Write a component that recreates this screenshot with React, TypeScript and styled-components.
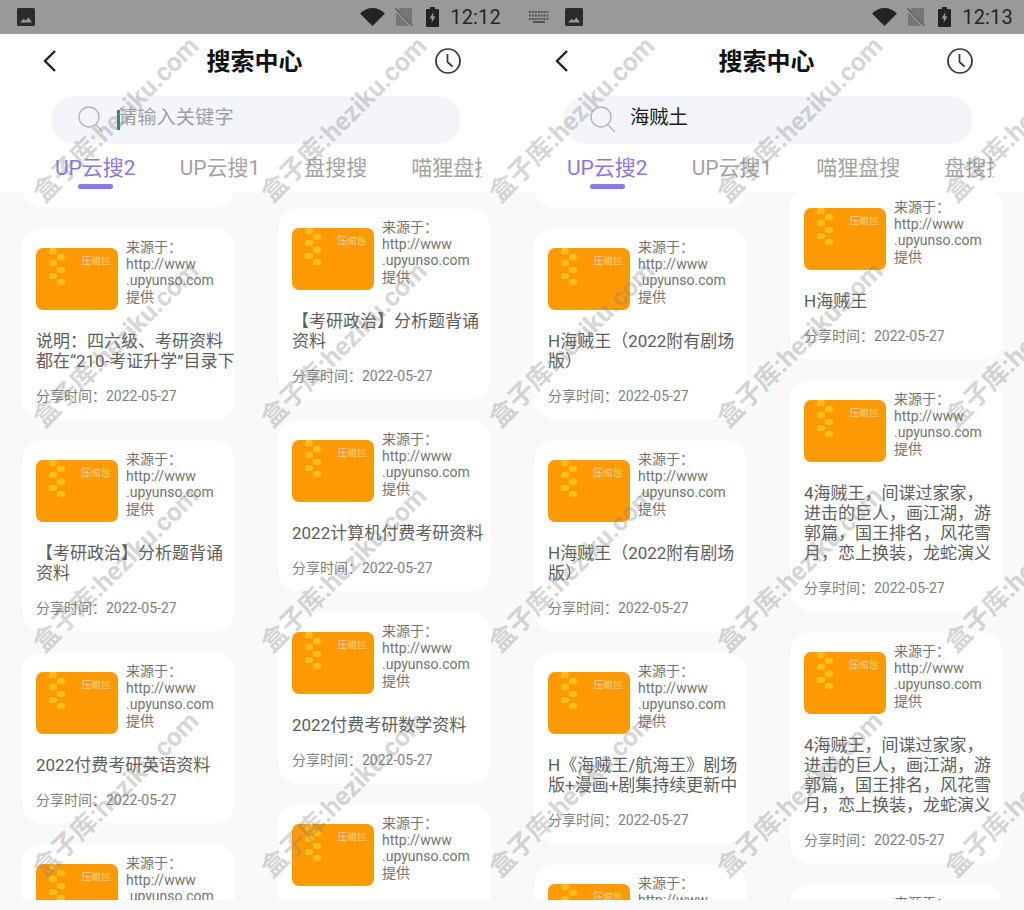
import React from 'react'
import styled, { createGlobalStyle } from 'styled-components'

const GlobalStyle = createGlobalStyle`
  html, body {
    margin: 0;
    padding: 0;
    background: #f9f9f9;
  }
  * {
    box-sizing: border-box;
  }
`

const FONT = `Roboto, "Noto Sans CJK SC", sans-serif`

const Page = styled.div`
  position: relative;
  display: flex;
  width: 1024px;
  height: 910px;
  overflow: hidden;
  font-family: ${FONT};
`

const Phone = styled.div`
  width: 512px;
  height: 910px;
  display: flex;
  flex-direction: column;
  background: #f9f9f9;
`

const StatusBar = styled.div`
  height: 34px;
  flex: none;
  background: #999999;
  display: flex;
  align-items: center;
  padding: 0 11px 0 17px;
  color: #222222;
`

const StatusLeft = styled.div`
  display: flex;
  align-items: center;
  gap: 16px;
  flex: 1;
`

const StatusRight = styled.div`
  display: flex;
  align-items: center;
`

const Time = styled.span`
  font-size: 20px;
  margin-left: 11px;
  letter-spacing: 0.2px;
  color: #262626;
`

const Top = styled.div`
  flex: none;
  height: 158px;
  background: #ffffff;
  display: flex;
  flex-direction: column;
`

const Header = styled.div`
  height: 54px;
  padding: 0 51px 0 42px;
  display: grid;
  grid-template-columns: 1fr auto 1fr;
  align-items: center;
  justify-items: start;
`

const HeaderTitle = styled.h1`
  margin: 2px 0 0 6px;
  font-size: 24px;
  font-weight: 700;
  color: #111111;
  line-height: 32px;
`

const HeaderAction = styled.div`
  justify-self: end;
  display: flex;
`

const SearchBar = styled.div`
  width: 410px;
  height: 48px;
  margin: 8px 0 0 51px;
  border-radius: 24px;
  background: #f3f5fa;
  display: flex;
  align-items: center;
  padding: 0 0 0 27px;
  font-size: 19.3px;
`

const SearchText = styled.span<{ $filled: boolean }>`
  margin-left: ${(p) => (p.$filled ? '14px' : '-2px')};
  padding-bottom: 9px;
  color: ${(p) => (p.$filled ? '#1a1a1a' : '#a0a0a0')};
`

const Caret = styled.span`
  width: 3px;
  height: 20px;
  margin-left: 13px;
  background: #12957c;
`

const Tabs = styled.div`
  width: 431px;
  margin: 9px 0 0 51px;
  padding-left: 4px;
  display: flex;
  gap: 44px;
  overflow: hidden;
`

const Tab = styled.div<{ $active?: boolean }>`
  flex: none;
  position: relative;
  height: 37px;
  font-size: 21px;
  line-height: 30px;
  white-space: nowrap;
  color: ${(p) => (p.$active ? '#8b78e6' : '#a3a3a3')};
`

const TabMark = styled.span`
  position: absolute;
  left: 23px;
  bottom: 1px;
  width: 35px;
  height: 5px;
  border-radius: 3px;
  background: #8b78e6;
`

const List = styled.div`
  flex: none;
  height: 708px;
  padding-left: 22px;
  display: flex;
  gap: 43px;
  overflow: hidden;
`

const Column = styled.div<{ $shift: number }>`
  width: 213px;
  flex: none;
  display: flex;
  flex-direction: column;
  gap: 22px;
  margin-top: ${(p) => p.$shift}px;
`

const CardBox = styled.div`
  flex: none;
  width: 213px;
  background: #ffffff;
  border-radius: 20px;
  padding: 10px 0 15px 14px;
`

const CardTop = styled.div`
  display: flex;
  gap: 8px;
  height: 66px;
`

const Thumb = styled.div`
  position: relative;
  flex: none;
  width: 82px;
  height: 62px;
  margin-top: 9px;
  border-radius: 7px;
  background: #ff9a05;
  overflow: hidden;
`

const ThumbLabel = styled.span`
  position: absolute;
  top: 7px;
  right: 8px;
  font-size: 9.5px;
  line-height: 12px;
  color: #ffd48a;
`

const Source = styled.div`
  font-size: 14px;
  line-height: 16.5px;
  color: #737373;
`

const CardTitle = styled.div`
  margin-top: 26px;
  font-size: 17px;
  line-height: 20px;
  color: #5e5e5e;
`

const CardDate = styled.div`
  margin-top: 17px;
  font-size: 14px;
  line-height: 16px;
  color: #7f7f7f;
`

const Marks = styled.div`
  position: absolute;
  left: 0;
  top: 5px;
  display: grid;
  grid-template-columns: repeat(5, 228px);
  grid-auto-rows: 225px;
  pointer-events: none;
`

const Mark = styled.div`
  display: flex;
  align-items: center;
  justify-content: center;
  white-space: nowrap;
  font-size: 26px;
  font-weight: 700;
  color: rgba(125, 125, 125, 0.33);
  transform: rotate(-45deg);
`

const ZipperIcon = () => (
  <svg width="82" height="62" viewBox="0 0 82 62">
    {[
      [13, 0],
      [21, 6],
      [13, 12],
      [21, 19],
      [13, 25],
      [21, 31],
    ].map(([x, y]) => (
      <rect key={`${x}-${y}`} x={x} y={y} width="8" height="6" rx="2.5" fill="#ffc01e" />
    ))}
  </svg>
)

const ImageIcon = () => (
  <svg width="18" height="18" viewBox="0 0 18 18">
    <path
      d="M1.500 0h15A1.500 1.500 0 0 1 18 1.500v15a1.500 1.500 0 0 1-1.500 1.500h-15A1.500 1.500 0 0 1 0 16.500v-15A1.500 1.500 0 0 1 1.500 0zM3 14.500h12l-3.500-5-2.800 3.300-1.900-2.100z"
      fill="#2b2b2b"
      fillRule="evenodd"
    />
  </svg>
)

const KeyboardIcon = () => (
  <svg width="20" height="12" viewBox="0 0 20 12">
    <g fill="#555555">
      {[0, 3.500, 7].map((y) =>
        [0, 1, 2, 3, 4, 5, 6].map((i) => (
          <rect key={`${y}-${i}`} x={i * 2.9} y={y} width="2" height="2" />
        )),
      )}
      <rect x="4" y="10" width="12" height="2" />
    </g>
  </svg>
)

const WifiIcon = () => (
  <svg width="25" height="18" viewBox="0 0 25 18">
    <path d="M0 5.500C3.500 2 8 0 12.500 0S21.500 2 25 5.500L12.500 18z" fill="#222222" />
  </svg>
)

const NoSimIcon = () => (
  <svg width="18" height="18" viewBox="0 0 18 18" style={{ marginLeft: 10 }}>
    <path d="M5 0h12v16.500L3 1.500zM1 4l13.500 14H1z" fill="#777777" />
    <path d="M0.500 0.500L17.500 18" stroke="#555555" strokeWidth="1.300" />
  </svg>
)

const BatteryIcon = () => (
  <svg width="13" height="20" viewBox="0 0 13 20" style={{ marginLeft: 13 }}>
    <path
      d="M4 0h5v2h3a1 1 0 0 1 1 1v16a1 1 0 0 1-1 1H1a1 1 0 0 1-1-1V3a1 1 0 0 1 1-1h3zM7.500 5L3.500 11.500h2.500L5.500 16l4-6.500H7z"
      fill="#222222"
      fillRule="evenodd"
    />
  </svg>
)

const BackIcon = () => (
  <svg width="16" height="24" viewBox="0 0 16 24" fill="none">
    <path d="M13 2L3 12l10 10" stroke="#222222" strokeWidth="2.400" />
  </svg>
)

const ClockIcon = () => (
  <svg width="26" height="26" viewBox="0 0 26 26" fill="none" stroke="#333333" strokeWidth="1.700">
    <circle cx="13" cy="13" r="12" />
    <path d="M12.500 6v8l5 4.500" />
  </svg>
)

const SearchIcon = () => (
  <svg width="26" height="28" viewBox="0 0 26 28" fill="none" stroke="#b4b4b4" strokeWidth="1.400">
    <circle cx="11" cy="11" r="10" />
    <path d="M18 19l7 7" />
  </svg>
)

type CardData = {
  title: React.ReactNode
}

const Card: React.FC<CardData> = ({ title }) => (
  <CardBox>
    <CardTop>
      <Thumb>
        <ZipperIcon />
        <ThumbLabel>压缩包</ThumbLabel>
      </Thumb>
      <Source>
        来源于：
        <br />
        http://www
        <br />
        .upyunso.com
        <br />
        提供
      </Source>
    </CardTop>
    <CardTitle>{title}</CardTitle>
    <CardDate>分享时间：2022-05-27</CardDate>
  </CardBox>
)

const PIRATE_LONG = (
  <>
    4海贼王，间谍过家家，
    <br />
    进击的巨人，画江湖，游
    <br />
    郭篇，国王排名，风花雪
    <br />
    月，恋上换装，龙蛇演义
  </>
)

const POLITICS = (
  <>
    【考研政治】分析题背诵
    <br />
    资料
  </>
)

const PIRATE_2022 = (
  <>
    H海贼王（2022附有剧场
    <br />
    版）
  </>
)

const phones = [
  {
    time: '12:12',
    keyboard: false,
    query: '',
    tabs: ['UP云搜2', 'UP云搜1', '盘搜搜', '喵狸盘搜'],
    columns: [
      {
        shift: -155,
        cards: [
          '资料',
          <>
            说明：四六级、考研资料
            <br />
            都在“210-考证升学”目录下
          </>,
          POLITICS,
          '2022付费考研英语资料',
          '考研资料',
        ],
      },
      {
        shift: 17,
        cards: [POLITICS, '2022计算机付费考研资料', '2022付费考研数学资料', '考研资料'],
      },
    ],
  },
  {
    time: '12:13',
    keyboard: true,
    query: '海贼土',
    tabs: ['UP云搜2', 'UP云搜1', '喵狸盘搜', '盘搜搜'],
    columns: [
      {
        shift: -155,
        cards: [
          '海贼王',
          PIRATE_2022,
          PIRATE_2022,
          <>
            H《海贼王/航海王》剧场
            <br />
            版+漫画+剧集持续更新中
          </>,
          '海贼王',
        ],
      },
      {
        shift: -3,
        cards: ['H海贼王', PIRATE_LONG, PIRATE_LONG, '海贼王'],
      },
    ],
  },
]

export default function App() {
  return (
    <>
      <GlobalStyle />
      <Page>
        {phones.map((phone) => (
          <Phone key={phone.time}>
            <StatusBar>
              <StatusLeft>
                {phone.keyboard && <KeyboardIcon />}
                <ImageIcon />
              </StatusLeft>
              <StatusRight>
                <WifiIcon />
                <NoSimIcon />
                <BatteryIcon />
                <Time>{phone.time}</Time>
              </StatusRight>
            </StatusBar>
            <Top>
              <Header>
                <BackIcon />
                <HeaderTitle>搜索中心</HeaderTitle>
                <HeaderAction>
                  <ClockIcon />
                </HeaderAction>
              </Header>
              <SearchBar>
                <SearchIcon />
                {phone.query ? (
                  <SearchText $filled>{phone.query}</SearchText>
                ) : (
                  <>
                    <Caret />
                    <SearchText $filled={false}>请输入关键字</SearchText>
                  </>
                )}
              </SearchBar>
              <Tabs>
                {phone.tabs.map((tab, i) => (
                  <Tab key={tab} $active={i === 0}>
                    {tab}
                    {i === 0 && <TabMark />}
                  </Tab>
                ))}
              </Tabs>
            </Top>
            <List>
              {phone.columns.map((column) => (
                <Column key={column.shift} $shift={column.shift}>
                  {column.cards.map((title, i) => (
                    <Card key={i} title={title} />
                  ))}
                </Column>
              ))}
            </List>
          </Phone>
        ))}
        <Marks>
          {Array.from({ length: 20 }, (_, i) => (
            <Mark key={i}>盒子库:heziku.com</Mark>
          ))}
        </Marks>
      </Page>
    </>
  )
}
